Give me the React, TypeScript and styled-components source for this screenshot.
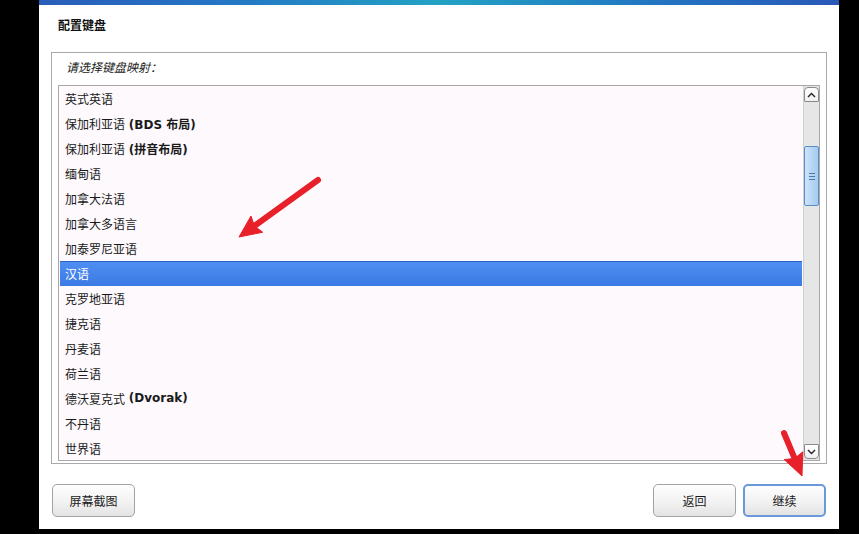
import React from "react";
import styled, { createGlobalStyle } from "styled-components";

const Global = createGlobalStyle`
  html, body { margin: 0; padding: 0; background: #000; }
  body { font-family: "DejaVu Sans", "Noto Sans CJK SC", sans-serif; }
`;

const Page = styled.div`
  position: relative;
  width: 859px;
  height: 534px;
  background: #000;
  overflow: hidden;
`;

const Window = styled.div`
  margin-left: 39px;
  width: 800px;
  height: 529px;
  background: #fff;
  display: flex;
  flex-direction: column;
`;

const TopBar = styled.div`
  height: 5px;
  flex: none;
  background: linear-gradient(90deg, #2a5cba 0%, #2478c4 25%, #22a2c4 50%, #2278c2 75%, #2a58b8 100%);
`;

const Title = styled.div`
  padding: 13px 0 0 19px;
  height: 16px;
  line-height: 16px;
  font-size: 12px;
  font-weight: bold;
  color: #111;
  margin-bottom: 18px;
`;

const Frame = styled.div`
  margin-left: 12px;
  width: 774px;
  height: 410px;
  border: 1px solid #a9a9a9;
  display: flex;
  flex-direction: column;
`;

const Prompt = styled.div`
  padding: 7px 0 0 14px;
  height: 16px;
  line-height: 16px;
  font-size: 12px;
  font-style: italic;
  color: #222;
  margin-bottom: 9px;
`;

const ListBox = styled.div`
  margin: 0 6px;
  height: 374px;
  border: 1px solid #a9a9a9;
  background: #fdf9fd;
  display: flex;
`;

const Rows = styled.div`
  flex: 1;
  padding: 0 1px;
  overflow: hidden;
`;

const Row = styled.div<{ $selected?: boolean }>`
  height: 25px;
  box-sizing: border-box;
  padding: 0 0 2px 5px;
  display: flex;
  align-items: center;
  font-size: 12px;
  color: ${(p) => (p.$selected ? "#fff" : "#1a1a1a")};
  background: ${(p) => (p.$selected ? "linear-gradient(180deg, #4f8ef2, #3c7ae4)" : "transparent")};
  border-top: 1px solid ${(p) => (p.$selected ? "#2d62bf" : "transparent")};
  white-space: pre;
`;

const Note = styled.b`
  font-weight: bold;
`;

const ScrollBar = styled.div`
  width: 16px;
  flex: none;
  display: flex;
  flex-direction: column;
  padding: 1px 0;
  box-sizing: border-box;
  background: #e6e6e6;
  border-left: 1px solid #d0d0d0;
`;

const ScrollBtn = styled.div<{ $up?: boolean }>`
  height: 15px;
  flex: none;
  box-sizing: border-box;
  border: 1px solid #8a8a8a;
  border-radius: ${(p) => (p.$up ? "4px 4px 1px 1px" : "1px 1px 4px 4px")};
  background: linear-gradient(180deg, #ffffff, #f0f0f0);
  display: flex;
  align-items: center;
  justify-content: center;
`;

const Track = styled.div`
  flex: 1;
  display: flex;
  flex-direction: column;
  padding-top: 44px;
`;

const Thumb = styled.div`
  height: 60px;
  box-sizing: border-box;
  border: 1px solid #5a8ec6;
  border-radius: 2px;
  background: linear-gradient(90deg, #cfe4fa, #b4d4f4 60%, #a6cbef);
  display: flex;
  flex-direction: column;
  align-items: center;
  justify-content: center;
  gap: 2px;
`;

const Grip = styled.div`
  width: 6px;
  height: 1px;
  background: #4a78a8;
`;

const ButtonRow = styled.div`
  margin-top: 20px;
  padding: 0 13px 0 13px;
  display: flex;
  gap: 7px;
`;

const Spacer = styled.div`
  flex: 1;
`;

const Button = styled.button<{ $focused?: boolean }>`
  width: 83px;
  height: 33px;
  box-sizing: border-box;
  border: ${(p) => (p.$focused ? "2px solid #6b98d8" : "1px solid #a3a3a3")};
  border-radius: 5px;
  background: linear-gradient(180deg, #fefefe 0%, #f2f2f2 55%, #e3e3e3 100%);
  font-family: "DejaVu Sans", "Noto Sans CJK SC", sans-serif;
  font-size: 12px;
  color: #1a1a1a;
  padding: 0 0 1px 0;
`;

const Overlay = styled.svg`
  position: absolute;
  left: 0;
  top: 0;
  pointer-events: none;
`;

const items: { name: string; note?: string }[] = [
  { name: "英式英语" },
  { name: "保加利亚语", note: "(BDS 布局)" },
  { name: "保加利亚语", note: "(拼音布局)" },
  { name: "缅甸语" },
  { name: "加拿大法语" },
  { name: "加拿大多语言" },
  { name: "加泰罗尼亚语" },
  { name: "汉语" },
  { name: "克罗地亚语" },
  { name: "捷克语" },
  { name: "丹麦语" },
  { name: "荷兰语" },
  { name: "德沃夏克式", note: "(Dvorak)" },
  { name: "不丹语" },
  { name: "世界语" },
];

function Arrow({ x1, y1, x2, y2 }: { x1: number; y1: number; x2: number; y2: number }) {
  const dx = x2 - x1;
  const dy = y2 - y1;
  const len = Math.hypot(dx, dy);
  const ux = dx / len;
  const uy = dy / len;
  const hl = 22;
  const hw = 10;
  const bx = x2 - ux * hl;
  const by = y2 - uy * hl;
  const px = -uy;
  const py = ux;
  return (
    <g fill="#e8202a" stroke="#e8202a">
      <line x1={x1} y1={y1} x2={bx + ux * 4} y2={by + uy * 4} strokeWidth={6} strokeLinecap="round" />
      <polygon
        strokeWidth={1}
        strokeLinejoin="round"
        points={`${x2},${y2} ${bx + px * hw},${by + py * hw} ${bx + ux * 3},${by + uy * 3} ${bx - px * hw},${by - py * hw}`}
      />
    </g>
  );
}

export default function App() {
  return (
    <Page>
      <Global />
      <Window>
        <TopBar />
        <Title>配置键盘</Title>
        <Frame>
          <Prompt>请选择键盘映射：</Prompt>
          <ListBox>
            <Rows>
              {items.map((it, i) => (
                <Row key={i} $selected={it.name === "汉语"}>
                  {it.name}
                  {it.note ? " " : ""}
                  {it.note ? <Note>{it.note}</Note> : null}
                </Row>
              ))}
            </Rows>
            <ScrollBar>
              <ScrollBtn $up>
                <svg width="9" height="6" viewBox="0 0 9 6">
                  <path d="M1 5 L4.5 1.5 L8 5" fill="none" stroke="#222" strokeWidth="1.4" />
                </svg>
              </ScrollBtn>
              <Track>
                <Thumb>
                  <Grip />
                  <Grip />
                  <Grip />
                </Thumb>
              </Track>
              <ScrollBtn>
                <svg width="9" height="6" viewBox="0 0 9 6">
                  <path d="M1 1 L4.5 4.5 L8 1" fill="none" stroke="#222" strokeWidth="1.4" />
                </svg>
              </ScrollBtn>
            </ScrollBar>
          </ListBox>
        </Frame>
        <ButtonRow>
          <Button>屏幕截图</Button>
          <Spacer />
          <Button>返回</Button>
          <Button $focused>继续</Button>
        </ButtonRow>
      </Window>
      <Overlay width="859" height="534" viewBox="0 0 859 534">
        <Arrow x1={318} y1={180} x2={239} y2={237} />
        <Arrow x1={784} y1={433} x2={802} y2={476} />
      </Overlay>
    </Page>
  );
}
